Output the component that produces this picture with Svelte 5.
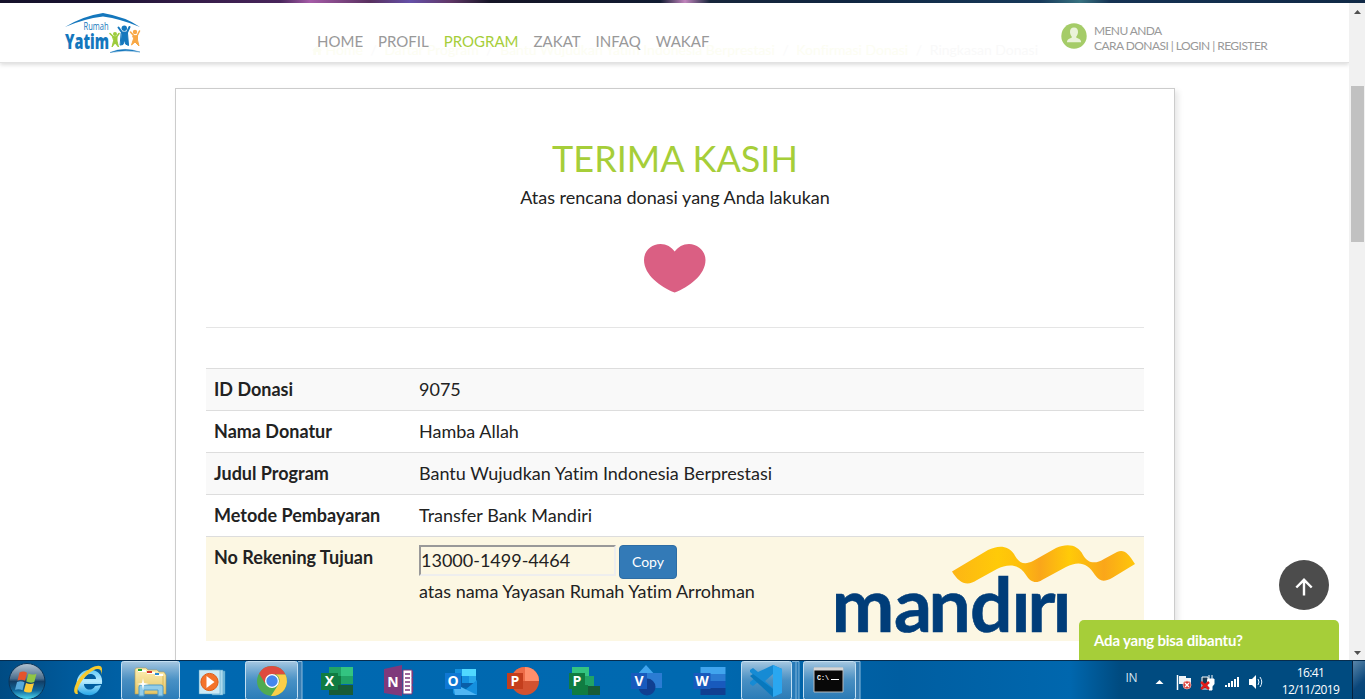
<script>
  const menu = ['HOME', 'PROFIL', 'PROGRAM', 'ZAKAT', 'INFAQ', 'WAKAF'];
  const rows = [
    ['ID Donasi', '9075'],
    ['Nama Donatur', 'Hamba Allah'],
    ['Judul Program', 'Bantu Wujudkan Yatim Indonesia Berprestasi'],
    ['Metode Pembayaran', 'Transfer Bank Mandiri']
  ];
</script>

<div class="screen">
  <div class="strip"></div>
  <div class="window">
    <div class="page">
      <header>
        <div class="crumbs"><span><svg width="10" height="9" viewBox="0 0 10 9"><path d="M5 0 10 4.5H8.7V9H6V6H4v3H1.300V4.500H0z" fill="#fcfdf2"/></svg> Home</span><i>/</i><span>Daftar Program</span><i>/</i><span>Bantu Wujudkan Yatim Indonesia Berprestasi</span><i>/</i><span>Konfirmasi Donasi</span><i>/</i><span class="last">Ringkasan Donasi</span></div>
        <svg class="logo" width="78" height="42" viewBox="64 12 78 42">
          <path d="M65 27Q83 16 103 13Q126 17 140 27Q121 19 103 16.500Q83 19 65 27z" fill="#1477bd"/>
          <text x="83.500" y="30.300" textLength="25" lengthAdjust="spacingAndGlyphs" font-family="Open Sans" font-size="10" fill="#1477bd">Rumah</text>
          <text x="65" y="49" textLength="44" lengthAdjust="spacingAndGlyphs" font-family="Open Sans" font-weight="800" font-size="21" fill="#1477bd">Yatim</text>
          <g fill="none" stroke-linecap="round" stroke-linejoin="round">
            <g stroke="#9ccb3b" stroke-width="1.600"><path d="M110 33.500 113.500 37h3L119 33.500"/><path d="M113 37h4v4l1.500 6-3.500-4-3 4 1.500-6z" fill="#9ccb3b" stroke-width="1"/></g>
            <g stroke="#1477bd" stroke-width="2"><path d="M118.500 27.500 122 32.500h5L129.500 27"/><path d="M121.500 33h6l1 12.500-3-1.500-1-4-1.500 4.500-2.500.5z" fill="#1477bd" stroke-width="1"/></g>
            <g stroke="#f8a845" stroke-width="1.600"><path d="M130.500 32 134 36h3L139.500 31"/><path d="M133 36h4.500v4l1.500 6-4-4-3.500 3 2-6z" fill="#f8a845" stroke-width="1"/></g>
          </g>
          <circle cx="115" cy="34" r="2" fill="#9ccb3b"/><circle cx="124.300" cy="28.300" r="2.700" fill="#1477bd"/><circle cx="135" cy="32" r="2.200" fill="#f8a845"/>
          <path d="M110 52.500Q124 46.500 140 52Q125 49.500 110 52.500z" fill="#1477bd" stroke="#1477bd" stroke-width=".4"/>
        </svg>
        <nav>{#each menu as m}<a class:on={m === 'PROGRAM'}>{m}</a>{/each}</nav>
        <div class="user">
          <svg width="26" height="26" viewBox="0 0 26 26"><circle cx="13" cy="13" r="12.700" fill="#a5cc68"/><path d="M13 4.500c2.700 0 4.200 2 4 4.700-.1 1.900-.9 3.300-1.700 4.200v1.400c2.500 1 4.800 1.500 4.800 4.500H6c0-3 2.200-3.500 4.700-4.500v-1.400C9.900 12.500 9.100 11.100 9 9.200c-.2-2.700 1.300-4.700 4-4.700z" fill="#eaf3da"/></svg>
          <div><p class="m1">MENU ANDA</p><p class="m2">CARA DONASI | LOGIN | REGISTER</p></div>
        </div>
      </header>
      <main>
        <section class="card">
          <h1>TERIMA KASIH</h1>
          <p class="sub">Atas rencana donasi yang Anda lakukan</p>
          <svg class="heart" width="62" height="49" viewBox="0 0 62 49"><path d="M30.700 7.500C34 3 39 0 45 0c9 0 16.500 7 16.500 16C61.500 31 45 43 30.700 48.500 16.500 43 0 31 0 16 0 7 7 0 16.500 0c6 0 11 3 14.200 7.500z" fill="#da5f83"/></svg>
          <hr>
          <div class="table">
            {#each rows as r}<div class="row"><b>{r[0]}</b><span class="val">{r[1]}</span></div>{/each}
            <div class="row pay">
              <b>No Rekening Tujuan</b>
              <div class="account">
                <div class="line"><input value="13000-1499-4464" readonly><button>Copy</button></div>
                <span class="owner">atas nama Yayasan Rumah Yatim Arrohman</span>
              </div>
              <svg class="bank" width="300" height="92" viewBox="836 544 300 92">
                <defs><linearGradient id="gold"><stop stop-color="#fdb515"/><stop offset=".25" stop-color="#ffca08"/><stop offset=".36" stop-color="#fec00c"/><stop offset=".48" stop-color="#faa61a"/><stop offset=".64" stop-color="#ffca08"/><stop offset=".83" stop-color="#faa61a"/><stop offset="1" stop-color="#ffc70a"/></linearGradient></defs>
                <path d="M952 571.500 988 550C998 545 1008 545 1014 554C1019 564 1025 565 1033 561L1056 548C1068 543 1078 545 1083 555C1088 564 1096 564 1104 559L1117 552C1124 549 1128 553 1135 564L1112 578C1104 582 1100 582 1095 575C1087 562 1078 561 1066 567L1042 580C1036 584 1030 582 1026 575C1019 563 1007 564 997 569L977 580C967 587 959 583 952 571.500z" fill="url(#gold)"/>
                <text x="831.500 894 928.500 970 1011.500 1027.500 1052.500" y="632" font-family="Lato" font-weight="700" font-size="75" fill="#003d79" stroke="#003d79" stroke-width=".6">mandırı</text>
              </svg>
            </div>
          </div>
        </section>
      </main>
      <div class="up"><svg width="18" height="18" viewBox="0 0 18 18" fill="none" stroke="#fff" stroke-width="2.400"><path d="M9 17.500V2M1.300 9.500 9 1.800l7.700 7.700"/></svg></div>
      <div class="chat">Ada yang bisa dibantu?</div>
    </div>
    <div class="scroll">
      <svg width="7" height="4"><path d="M0 4 3.500 0 7 4z" fill="#505050"/></svg>
      <div class="thumb"></div>
      <svg width="7" height="4"><path d="M0 0 3.500 4 7 0z" fill="#505050"/></svg>
    </div>
  </div>
  <footer>
    <svg class="start" width="58" height="39" viewBox="0 0 58 39">
      <defs>
        <linearGradient id="orb" x2="0" y2="1"><stop stop-color="#b5c5d3"/><stop offset=".42" stop-color="#4b6e8d"/><stop offset=".5" stop-color="#123e66"/><stop offset=".75" stop-color="#10679b"/><stop offset="1" stop-color="#52dff5"/></linearGradient>
        <linearGradient id="glass" x2="0" y2="1"><stop stop-color="#b9d3e7" stop-opacity=".9"/><stop offset=".5" stop-color="#6ea6d0" stop-opacity=".65"/><stop offset="1" stop-color="#4187bd" stop-opacity=".65"/></linearGradient>
        <linearGradient id="folder" x2="0" y2="1"><stop stop-color="#fdf0b5"/><stop offset="1" stop-color="#e4c566"/></linearGradient>
        <linearGradient id="ie" x2="0" y2="1"><stop stop-color="#5fc9f7"/><stop offset=".45" stop-color="#b9ecff"/><stop offset="1" stop-color="#26a6e8"/></linearGradient>
      </defs>
      <circle cx="27" cy="20.500" r="18" fill="url(#orb)" stroke="#0b3458"/>
      <path d="M19.500 11.500q4-2 7.500.2l-2 8q-3.500-2-7.500-.2z" fill="#e5542c"/><path d="M28.500 12.500q3.500 2 8 .2l-2.200 8.300q-4 1.500-8-.5z" fill="#90c645"/><path d="M17 21q4-1.700 7.500.3l-2 8q-3.500-2-7.500-.5z" fill="#58a9dc"/><path d="M26 22q4 2 8 .3L31.500 31q-4 1.500-7.700-.8z" fill="#fccb38"/>
    </svg>
    <svg class="slot" viewBox="0 0 62 39"><path d="M43 24C41 31 36 35 29 34 21 33 17 27 19 19 21 12 27 8 34 9c7 1 11 6 10 14H26c0 6 8 8 11 2zM26 18h12c0-6-10-7-12 0z" fill="url(#ie)" fill-rule="evenodd"/><path d="M20 33C14 34 15 24 24 14 34 4 44 2 44 8q0 3-1 6 1-7-4-6C32 9 17 24 20 33z" fill="#f5ca2f"/></svg>
    <svg class="slot" viewBox="0 0 62 39"><rect x="1.500" y=".5" width="58" height="38" rx="2" fill="url(#glass)" stroke="#c2dff2"/><path d="M15 33V9q0-2 2-2h9l2 2h9l2 2h5l2 3v19z" fill="url(#folder)" stroke="#b99a4b" stroke-width=".6"/><path d="M18 10h8M27 12h8M35 14h8" stroke="#fff" stroke-width="2"/><path d="M18 9h4" stroke="#25a52d" stroke-width="2"/><path d="M27 11h5" stroke="#d4382d" stroke-width="2"/><path d="M35 13h4" stroke="#2989d1" stroke-width="2"/><path d="M43 15v17" stroke="#d8b65a"/><path d="M19 35v-9q0-2 2-2h20q2 0 2 2v9h-5v-6H24v6z" fill="#93cde9" stroke="#4e9dcc"/><path d="m23 17 1 5 5 1-5 1-1 5-1-5-5-1 5-1z" fill="#fff"/></svg>
    <svg class="slot" viewBox="0 0 62 39"><g stroke="#4096c1" stroke-width=".5"><path d="M34 10h9v23h-9z" fill="#7ac0df"/><path d="M30 9h11v25H30z" fill="#aadaed"/><path d="M17 9h21v24H17z" fill="#cceaf5"/></g><circle cx="27.500" cy="21" r="8.600" fill="#f4732a" stroke="#dc5c18"/><path d="M24.500 15v12l8-6z" fill="#fff"/></svg>
    <svg class="slot" viewBox="0 0 62 39"><path d="M54 .5h4v38h-4" fill="#387eb4" stroke="#8cbbdd"/><rect x="1.500" y=".5" width="52" height="38" rx="2" fill="url(#glass)" stroke="#c2dff2"/><g transform="translate(28 20)"><circle r="15" fill="#4fab51"/><path d="M-13-7.500A15 15 0 0 1 13.500-6.500H0A7 7 0 0 0-6.500 3z" fill="#de4b3f"/><path d="M13.500-6.500A15 15 0 0 1-1 15L6 4A7 7 0 0 0 4-6.500z" fill="#fbce49"/><circle r="7" fill="#fff"/><circle r="5.700" fill="#4587ed"/></g></svg>
    <svg class="slot" viewBox="-8 0 62 39"><path d="M15 6h24v9H15z" fill="#21a366"/><path d="M27 6h12v9H27z" fill="#33c481"/><path d="M15 15h12v10H15z" fill="#107c41"/><path d="M27 15h12v8H27z" fill="#21a366"/><path d="M15 24h24v10H15z" fill="#185c37"/><path d="M7 12h17v17H7z" fill="#107c41"/><text x="15.500" y="25" class="tile">X</text></svg>
    <svg class="slot" viewBox="-8 0 62 39"><path d="M27 9h9v24h-9z" fill="#fff" stroke="#80397b"/><path d="M29 13h5M29 17h5M29 21h5M29 25h5M29 29h5M36.500 10v6M36.500 17v6M36.500 25v6" stroke="#80397b" stroke-width="1.300"/><path d="m8 8 18-4v31L8 32z" fill="#80397b"/><text x="17" y="25.500" class="tile">N</text></svg>
    <svg class="slot" viewBox="-8 0 62 39"><path d="M17 8h21v18H17z" fill="#0a5ea8"/><path d="M17 8h7v7h-7z" fill="#1490df"/><path d="M24 8h14v7H24z" fill="#50d9ff"/><path d="M24 15h7v7h-7z" fill="#1490df"/><path d="M31 15h7v7h-7z" fill="#28a8ea"/><path d="m15 22 12 7 12-10v15H17l-2-2z" fill="#1490df"/><path d="m15 22 24 12H17z" fill="#50b6f4"/><path d="M7 12h16v16H7z" fill="#0f78d4"/><text x="15" y="25" class="tile">O</text></svg>
    <svg class="slot" viewBox="-8 0 62 39"><circle cx="25" cy="20" r="14" fill="#d35230"/><path d="M25 6a14 14 0 0 1 14 14H25z" fill="#ff8f6b"/><path d="M25 6v14H11A14 14 0 0 1 25 6z" fill="#ed6c47"/><path d="M7 12h16v16H7z" fill="#c43e1c"/><text x="15" y="25" class="tile">P</text></svg>
    <svg class="slot" viewBox="-8 0 62 39"><path d="M10 6h17v10H10z" fill="#33c481"/><path d="M19 15h13v10H19z" fill="#21a366"/><path d="M16 25h22v9H16z" fill="#185c37"/><path d="M10 24h16v10H10z" fill="#107c41"/><path d="M7 12h16v16H7z" fill="#107c41"/><text x="15" y="25" class="tile">P</text></svg>
    <svg class="slot" viewBox="-8 0 62 39"><path d="M12 15 22 4l10 11-10 10z" fill="#41a5ee"/><path d="M22 12h16v15H22z" fill="#2b7cd3"/><circle cx="23" cy="26" r="8.500" fill="#103f91"/><path d="M7 12h16v16H7z" fill="#185abd"/><text x="15" y="25" class="tile">V</text></svg>
    <svg class="slot" viewBox="-8.500 0 62 39"><path d="M14 6h25v7H14z" fill="#41a5ee"/><path d="M14 13h25v7H14z" fill="#2b7cd3"/><path d="M14 20h25v7H14z" fill="#185abd"/><path d="M14 27h25v7H14z" fill="#103f91"/><path d="M7 12h17v16H7z" fill="#185abd"/><text x="15.500" y="25" class="tile">W</text></svg>
    <svg class="slot" viewBox="0 0 62 39"><path d="M52 .5h4v38h-4M56 .5h3v38h-3" fill="#277ab8" stroke="#80b5db"/><rect x="1.500" y=".5" width="50" height="38" rx="2" fill="url(#glass)" stroke="#c2dff2"/><path d="m33 4 9 4v24l-9 4-15-15-5 4-3-2v-2l6-5-6-5v-2l3-2 5 4zM33 13l-8 7 8 7z" fill="#168bd4" fill-rule="evenodd"/><path d="m10 15 3-2 20 15v8z" fill="#0878bd"/><path d="m33 4 9 4v24l-9 4z" fill="#2aa7f0"/></svg>
    <svg class="slot" viewBox="0 0 62 39"><path d="M53 .5h5v38h-5" fill="#387eb4" stroke="#8cbbdd"/><rect x="1.500" y=".5" width="52" height="38" rx="2" fill="url(#glass)" stroke="#c2dff2"/><path d="M12 7h29v24H12z" fill="#080808" stroke="#bababa"/><path d="M12 8h29" stroke="#d5d5d5" stroke-width="3"/><text x="15" y="19" font-family="Liberation Mono" font-weight="700" font-size="7.500" fill="#fff" textLength="12" lengthAdjust="spacingAndGlyphs">C:\</text><path d="M29 18.500h8" stroke="#fff"/></svg>
    <div class="tray">
      <span class="lang">IN</span>
      <svg width="112" height="39" viewBox="1152 660 112 39">
        <path d="m1155.500 683 4-4 4 4z" fill="#fff"/>
        <path d="M1177.500 674v15" stroke="#fff" stroke-width="1.500"/><path d="M1179 675h7v2h5v7h-6v-1h-6z" fill="#eef3f7"/><circle cx="1187" cy="684" r="4" fill="#d93b35" stroke="#f9bcb8" stroke-width=".7"/><path d="m1185 682 4 4m0-4-4 4" stroke="#fff" stroke-width="1.300"/>
        <path d="M1202 676h6v12h-6z" fill="#173b55" stroke="#fff"/><path d="M1208 678h6v5q-1 2-2 2v4h-3v-4l-2-2zM1209 674v4m3-4v4" fill="#fff" stroke="#fff"/><path d="m1201 681 8 7m0-7-8 7" stroke="#e21a19" stroke-width="2.500"/>
        <path d="M1226 686v-2m3 2v-4m3 4v-6m3 6v-8m3 8v-10" stroke="#fff" stroke-width="2"/>
        <path d="M1249 678h3l4-4v14l-4-4h-3z" fill="#fff"/><path d="M1258 678q2 3 0 6m2-8q3.500 5 0 10" fill="none" stroke="#e8f4ff"/>
      </svg>
      <div class="clock"><span>16:41</span><span>12/11/2019</span></div>
      <div class="desk"></div>
    </div>
  </footer>
</div>

<style>
  :global(body) { margin: 0; overflow: hidden; }
  * { box-sizing: border-box; }
  p, h1 { margin: 0; font-weight: 400; }
  .screen { width: 1365px; height: 699px; display: flex; flex-direction: column; overflow: hidden; font-family: Lato, sans-serif; font-variant-ligatures: none; color: #222; background: #fff; }
  .strip { height: 3px; flex: none; background: linear-gradient(90deg, #15112a 0, #191331 100px, #321b46 180px, #48255b 280px, #a55ba7 310px, #58305f 370px, #6550a8 410px, #603767 450px, #151526 490px, #101b31 660px, #c184bd 685px, #17263b 710px, #102641 850px, #17395a 1040px, #387281 1080px, #153253 1110px, #102946 1365px); }
  .window { flex: 1; display: flex; min-height: 0; }
  .page { width: 1349px; position: relative; overflow: hidden; display: flex; flex-direction: column; }
  header { height: 60px; flex: none; display: flex; position: relative; border-bottom: 1px solid #e2e2e2; box-shadow: 0 2px 4px #0002; background: #fff; }
  .crumbs { position: absolute; left: 312px; top: 38px; display: flex; white-space: nowrap; font-size: 14px; line-height: 18px; color: #fcfdf2; }
  .crumbs i { width: 21.5px; text-align: center; font-style: normal; color: #fafafa; }
  .crumbs .last { color: #f9f9f9; }
  .logo { margin: 9px 0 0 64px; width: 78px; }
  nav { position: relative; display: flex; gap: 15px; margin: 27px 0 0 175px; width: 744px; font-size: 15px; line-height: 22px; color: #999; }
  .on { color: #a6ce39; }
  .user { position: relative; display: flex; gap: 7px; margin-top: 20px; color: #999; white-space: nowrap; }
  .user p { font-size: 12px; line-height: 15px; }
  .user .m1 { letter-spacing: -.6px; }
  .user .m2 { letter-spacing: -.55px; }
  main { flex: 1; padding: 25px 0 0 175px; min-height: 0; }
  .card { width: 1000px; height: 700px; padding: 44px 30px 0; border: 1px solid #ccc; box-shadow: 3px 3px 6px #0000001a; display: flex; flex-direction: column; align-items: center; }
  h1 { font-size: 36px; line-height: 51px; color: #a6ce39; }
  .sub { font-size: 18px; line-height: 26px; }
  .heart { margin-top: 34px; }
  hr { width: 938px; height: 1px; border: 0; margin: 34px 0 40px; background: #e5e5e5; flex: none; }
  .table { width: 938px; font-size: 18px; }
  .row { display: flex; height: 42px; border-top: 1px solid #ddd; padding: 7px 8px 0; line-height: 26px; }
  .row:nth-child(odd) { background: #f9f9f9; }
  .row b { width: 205px; flex: none; }
  .row.pay { height: 105px; background: #fcf7e3; }
  .account { width: 417px; padding-top: 1px; }
  .line { display: flex; gap: 3px; height: 33px; }
  input { width: 197px; height: 31px; border: 2px solid; border-color: #999 #eee #eee #999; padding: 0 0 2px; font: 18px Lato; color: #222; background: transparent; }
  button { width: 58px; height: 34px; padding: 0 0 1px; background: #337ab7; border: 1px solid #2e6da4; border-radius: 4px; color: #fff; font: 14px Lato; }
  .bank { flex: none; }
  .up { position: absolute; left: 1279px; top: 557px; width: 50px; height: 50px; border-radius: 50%; background: #4c4c4c; display: grid; place-items: center; padding: 4px 1px 0 0; }
  .chat { position: absolute; left: 1079px; top: 617px; width: 260px; height: 40px; border-radius: 5px 5px 0 0; padding: 0 15px; line-height: 41px; font-size: 15px; font-weight: 700; letter-spacing: -.18px; color: #fff; background: #a6ce39; }
  .scroll { width: 16px; background: #f1f1f1; display: flex; flex-direction: column; align-items: center; padding: 7px 0 5px; }
  .thumb { width: 13px; height: 156px; margin: 72px 0 auto 1px; background: #c1c1c1; }
  footer { height: 39px; flex: none; display: flex; border-top: 1px solid #062c4e; background: linear-gradient(90deg, #004b83 0, #005a9b 70px, #0068b0 180px, #0069b0 700px, #005ea1 900px, #0067ae 1070px, #004b80 1120px, #004b80 1365px); }
  footer svg { flex: none; }
  .slot { width: 62px; height: 39px; }
  .tile { font: 700 14px "Open Sans"; fill: #fff; text-anchor: middle; }
  .tray { display: flex; margin-left: auto; color: #fff; }
  .lang { font: 12px/34px "Open Sans"; letter-spacing: -.5px; margin-right: 15px; color: #d7e6f1; }
  .clock { font: 12px/17px "Open Sans"; display: flex; flex-direction: column; align-items: center; width: 77px; margin: 3px 0 0 8px; letter-spacing: -.6px; }
  .desk { width: 13px; margin-left: 3px; border-left: 1px solid #08213c; background: linear-gradient(135deg, #5986aa, #0b477b 60%, #004476); }
</style>
